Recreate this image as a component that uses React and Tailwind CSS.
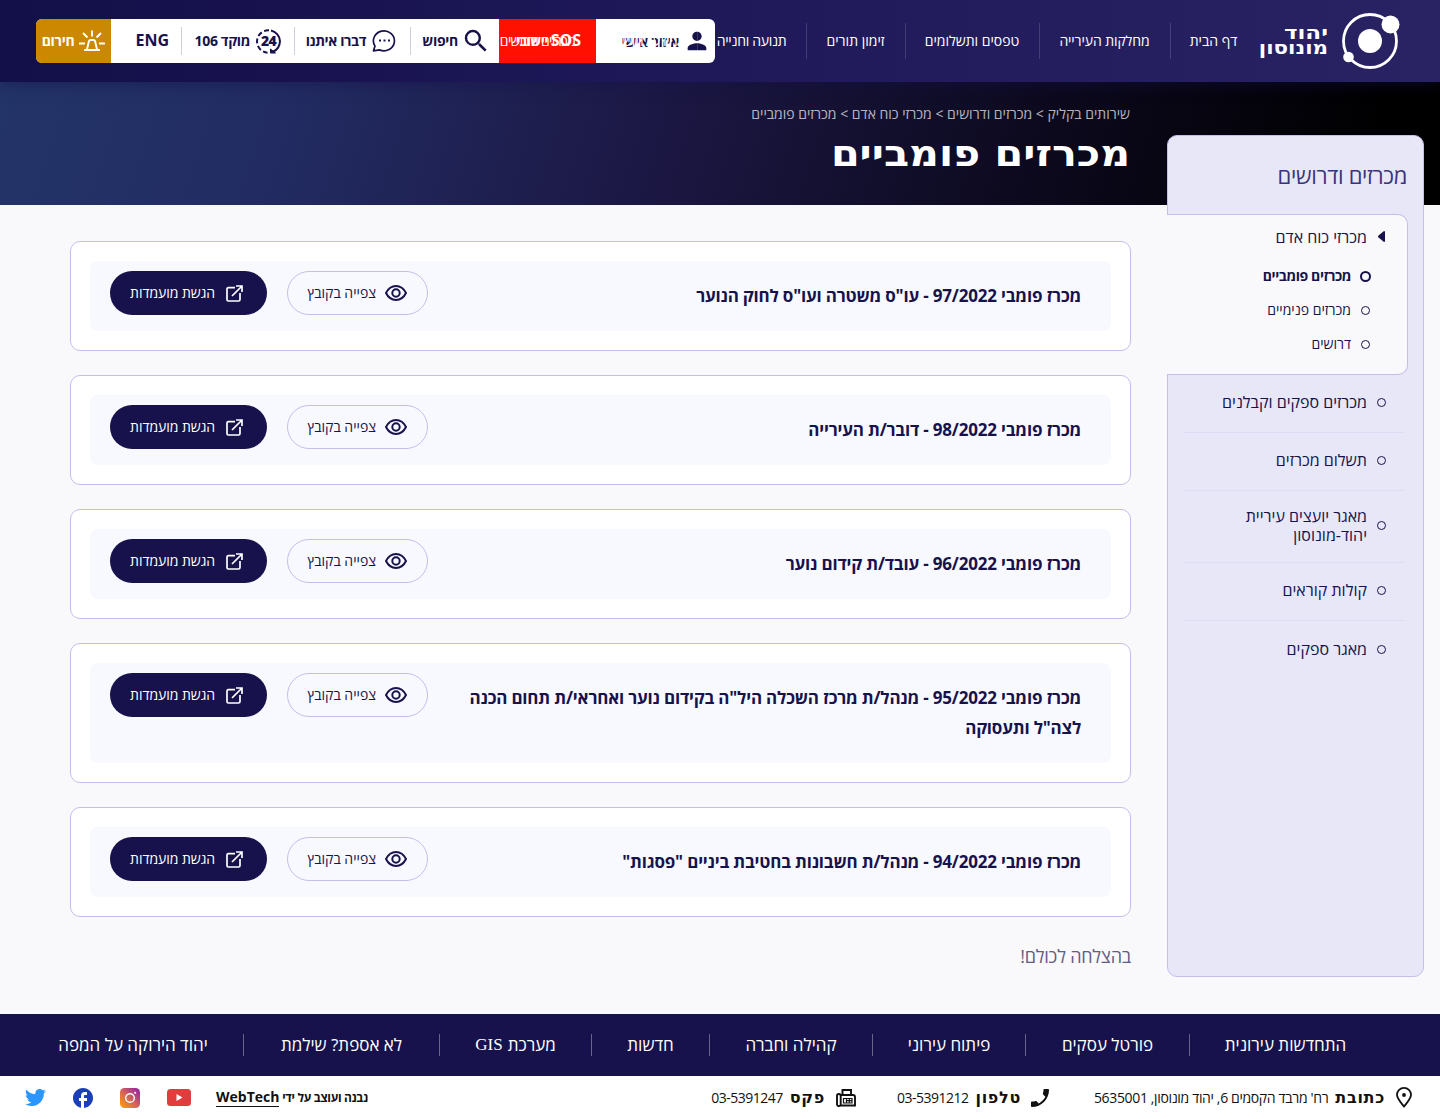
import React from 'react';
import clsx from 'clsx';
import { MdPerson, MdSearch, MdPhone, MdFacebook } from 'react-icons/md';
import { FaTwitter } from 'react-icons/fa';

const NAV_ITEMS = [
  { label: 'דף הבית', width: 'w-[87px]' },
  { label: 'מחלקות העירייה', width: 'w-[131px]', tracking: 'tracking-[-0.1px]' },
  { label: 'טפסים ותשלומים', width: 'w-[134px]' },
  { label: 'זימון תורים', width: 'w-[99px]' },
  { label: 'תנועה וחנייה', width: 'w-[109px]', tracking: 'tracking-[-0.3px]' },
  { label: 'מידע לתושב', width: 'w-[101px]', tracking: 'tracking-[-0.6px]' },
  { label: 'מכרזים ודרושים', width: 'w-[116px]', tracking: 'tracking-[-0.7px]' },
];

const SUB_ITEMS = [
  { label: 'מכרזים פומביים', active: true },
  { label: 'מכרזים פנימיים' },
  { label: 'דרושים' },
];

const SIDE_ITEMS = [
  { label: 'מכרזים ספקים וקבלנים', height: 'h-[58px]' },
  { label: 'תשלום מכרזים', height: 'h-[58px]' },
  { label: 'מאגר יועצים עיריית יהוד-מונוסון', height: 'h-[72px]' },
  { label: 'קולות קוראים', height: 'h-[58px]' },
  { label: 'מאגר ספקים', height: 'h-[58px]' },
];

const TENDERS = [
  'מכרז פומבי 97/2022 - עו"ס משטרה ועו"ס לחוק הנוער',
  'מכרז פומבי 98/2022 - דובר/ת העירייה',
  'מכרז פומבי 96/2022 - עובד/ת קידום נוער',
  'מכרז פומבי 95/2022 - מנהל/ת מרכז השכלה היל"ה בקידום נוער ואחראי/ת תחום הכנה לצה"ל ותעסוקה',
  'מכרז פומבי 94/2022 - מנהל/ת חשבונות בחטיבת ביניים "פסגות"',
];

const FOOTER_LINKS = [
  { label: 'התחדשות עירונית', width: 'w-[192px]' },
  { label: 'פורטל עסקים', width: 'w-[164px]' },
  { label: 'פיתוח עירוני', width: 'w-[153px]' },
  { label: 'קהילה וחברה', width: 'w-[163px]' },
  { label: 'חדשות', width: 'w-[118px]' },
  { label: 'מערכת', latin: 'GIS', width: 'w-[152px]' },
  { label: 'לא אספת? שילמת', width: 'w-[196px]' },
  { label: 'יהוד הירוקה על המפה', width: 'w-[220px]' },
];

const SirenIcon = () => (
  <svg width="26" height="22" viewBox="0 0 26 22" fill="none" stroke="currentColor" strokeWidth="1.9">
    <path d="M5 20h16M8 19.500l1.900-8.200q.3-1.300 1.600-1.300h3q1.300 0 1.600 1.300l1.900 8.200" />
    <path d="M13 .5v6M4 3l4.500 4.500M22 3l-4.500 4.500M0 13.500h6M20 13.500h6" />
  </svg>
);

const ChatIcon = () => (
  <svg width="25" height="24" viewBox="0 0 24 24" fill="none" stroke="currentColor" strokeWidth="1.7" strokeLinejoin="round">
    <path d="M1 21.800l1.500-4.700A10.500 10 0 1 1 7 20.900z" />
    <path d="M6.500 11.500h2M11 11.500h2M15.500 11.500h2" strokeWidth="1.8" />
  </svg>
);

const HotlineIcon = () => (
  <span className="relative flex size-[25px] items-center justify-center">
    <svg className="absolute inset-0" width="25" height="25" viewBox="0 0 25 25" fill="none" stroke="currentColor" strokeWidth="2">
      <path d="M15 1.500A11.200 11.200 0 0 1 16.500 23" />
      <path d="M13 1.300A11.200 11.200 0 0 0 11.500 23.700" strokeDasharray="5 2.600" />
      <path d="M14.500 20v4h5z" fill="currentColor" strokeWidth="1" />
    </svg>
    <span className="text-[14px] leading-none font-extrabold tracking-[-0.8px]">24</span>
  </span>
);

const EyeIcon = () => (
  <svg width="22" height="16" viewBox="0 0 22 16" fill="none" stroke="currentColor" strokeWidth="2">
    <path d="M1 8Q4.500 1 11 1T21 8Q17.500 15 11 15T1 8z" />
    <circle cx="11" cy="8" r="3.700" />
  </svg>
);

const ExternalIcon = () => (
  <svg width="17" height="17" viewBox="0 0 17 17" fill="none" stroke="currentColor" strokeWidth="1.700">
    <path d="M9 2.700H2.300Q1 2.700 1 4V14.500Q1 16 2.300 16H12.500Q14 16 14 14.500V8" />
    <path d="M10 1h6v6M16 1L6 11" />
  </svg>
);

const PinIcon = () => (
  <svg width="16" height="21" viewBox="0 0 16 21" fill="none" stroke="currentColor" strokeWidth="1.800">
    <path d="M8 19.500C4 14.500 1 11.500 1 7.800a7 6.900 0 0 1 14 0C15 11.500 12 14.500 8 19.500z" />
    <circle cx="8" cy="8" r="1.900" fill="currentColor" stroke="none" />
  </svg>
);

const FaxIcon = () => (
  <svg width="20" height="18" viewBox="0 0 20 18" fill="none" stroke="currentColor" strokeWidth="1.900">
    <rect x="1" y="5" width="3.700" height="12" rx="1.800" />
    <path d="M4.700 16.500H19V8q0-2-2-2H5M6.500 6V1H15v5" />
    <path d="M7.500 9.500v4.500h8.500V9.500z M10.500 9v5M13.300 9v5M10 11.700h6" strokeWidth="1.200" />
  </svg>
);

const YoutubeIcon = () => (
  <svg width="24" height="17" viewBox="0 0 24 17">
    <rect width="24" height="17" rx="3.500" fill="#e23d3d" />
    <path d="M9.500 5v7l6-3.500z" fill="#fff" />
  </svg>
);

const InstagramIcon = () => (
  <svg width="20" height="20" viewBox="0 0 20 20" fill="none">
    <defs>
      <linearGradient id="insta" x1="0" y1="20" x2="20" y2="0" gradientUnits="userSpaceOnUse">
        <stop stopColor="#ffa000" />
        <stop offset="0.5" stopColor="#d2615c" />
        <stop offset="1" stopColor="#8c1bab" />
      </linearGradient>
    </defs>
    <rect width="20" height="20" rx="4.500" fill="url(#insta)" />
    <circle cx="10" cy="10" r="4.300" stroke="#fff" strokeWidth="1.400" />
    <circle cx="15.200" cy="4.800" r="1" fill="#fff" />
  </svg>
);

const Logo = () => (
  <div className="flex items-center gap-[13px] text-white">
    <svg width="59" height="56" viewBox="0 0 59 56" fill="none">
      <circle cx="29" cy="28" r="26.500" stroke="#fff" strokeWidth="2.800" />
      <circle cx="29" cy="28" r="12" fill="#fff" />
      <circle cx="49.500" cy="11.500" r="9" fill="#fff" />
      <circle cx="7.500" cy="44" r="5.300" fill="#fff" />
    </svg>
    <div className="w-[69px] pb-0.5 font-['DejaVu_Sans'] text-[18px] leading-[15px] font-bold">
      <div className="origin-right scale-x-[1.28]">יהוד</div>
      <div className="origin-right scale-x-[1.19] whitespace-nowrap">מונוסון</div>
    </div>
  </div>
);

const ActionBar = () => (
  <div className="absolute top-[19px] left-9 flex h-11 w-[679px] items-center overflow-hidden rounded-md bg-white text-[14px] font-bold whitespace-nowrap text-[#17124b]">
    <div className="flex h-full w-[119px] items-center gap-2 pr-2">
      <MdPerson className="-mx-1 size-7" />
      <span className="tracking-[-0.4px]">איזור אישי</span>
    </div>
    <div className="flex h-full w-[97px] items-center bg-[#ff1000] pr-[15px] pb-0.5 text-white">
      <span className="tracking-[-0.6px]">
        <span className="text-[16px] tracking-normal">SOS</span> יישובי
      </span>
    </div>
    <div className="flex h-7 w-[89px] items-center gap-[3px] border-l border-[#d0cfdb] pr-2">
      <MdSearch className="size-[30px]" />
      <span className="pb-0.5 tracking-[-0.3px]">חיפוש</span>
    </div>
    <div className="flex h-7 w-[116px] items-center gap-[6px] border-l border-[#d0cfdb] pr-[13px]">
      <ChatIcon />
      <span className="pb-0.5 tracking-[-0.4px]">דברו איתנו</span>
    </div>
    <div className="flex h-7 w-[113px] items-center gap-[6px] border-l border-[#d0cfdb] pr-[13px]">
      <HotlineIcon />
      <span className="pb-0.5 tracking-[-0.35px]">מוקד 106</span>
    </div>
    <div className="flex h-full w-[70px] items-center pr-3 pb-0.5 text-[16px]">ENG</div>
    <div className="flex h-full w-[75px] items-center justify-center gap-[5px] bg-[#cc8800] text-white">
      <SirenIcon />
      <span className="pb-0.5 tracking-[-0.3px]">חירום</span>
    </div>
  </div>
);

const Header = () => (
  <header className="relative z-10 h-[82px] bg-linear-to-l from-[#292364] via-[#1f195a] to-[#130f48] shadow-[0_2px_14px_rgba(20,16,72,0.5)]">
    <ActionBar />
    <div className="relative flex h-full items-center pr-10">
      <Logo />
      <nav className="mr-[2px] flex">
        {NAV_ITEMS.map((item, i) => (
          <a
            key={item.label}
            className={clsx(
              'flex h-9 shrink-0 items-center justify-center pr-px pb-0.5 text-[14px] whitespace-nowrap text-white',
              item.width,
              item.tracking,
              i < NAV_ITEMS.length - 1 && 'border-l border-white/15'
            )}
          >
            {item.label}
          </a>
        ))}
      </nav>
    </div>
  </header>
);

const Bullet = ({ active }) => (
  <span className={clsx('shrink-0 rounded-full border-[#17124b]', active ? 'size-[11px] border-2' : 'mx-px size-[9px] border')} />
);

const Sidebar = () => (
  <aside className="-mt-[70px] h-[842px] w-[257px] shrink-0 rounded-[10px] border border-[#c6bdec] bg-[#e8e7f7] text-[#17124b]">
    <h2 className="flex h-[78px] items-center pr-4 text-[22px] tracking-[-0.3px] text-[#3a347c]">מכרזים ודרושים</h2>
    <div className="mr-[15px] -ml-px h-[161px] rounded-r-[10px] border border-l-0 border-[#c6bdec] bg-[#f9f9fb]">
      <div className="flex h-[43px] items-center gap-[11px] pr-[22px] text-[16px]">
        <svg width="7" height="11" viewBox="0 0 7 11">
          <path d="M6 0Q7 0 7 1v9q0 1-1 1L.5 6.500q-.9-1 0-2z" fill="#17124b" />
        </svg>
        <span>מכרזי כוח אדם</span>
      </div>
      <ul className="pt-px">
        {SUB_ITEMS.map((item) => (
          <li
            key={item.label}
            className={clsx('flex h-[34px] items-center gap-[9px] pr-9 text-[14px]', item.active && 'font-bold tracking-[-0.4px]')}
          >
            <Bullet active={item.active} />
            <span className="pb-px">{item.label}</span>
          </li>
        ))}
      </ul>
    </div>
    <ul className="mr-[18px] ml-4 divide-y divide-[#e0dcf6]">
      {SIDE_ITEMS.map((item) => (
        <li key={item.label} className={clsx('flex items-center gap-[9px] pr-[18px] pb-0.5 text-[16px] leading-[19px]', item.height)}>
          <Bullet />
          <span className="w-[150px]">{item.label}</span>
        </li>
      ))}
    </ul>
  </aside>
);

const TenderCard = ({ title }) => (
  <article className="rounded-[10px] border border-[#c6bdec] bg-white p-[19px]">
    <div className="flex items-start justify-between rounded-lg bg-[#f8f9ff] pr-[30px] pl-5">
      <h3 className="w-[620px] py-5 text-[17px] leading-[30px] font-bold tracking-[-0.19px] text-[#17124b]">{title}</h3>
      <div className="mt-[10px] flex gap-5 text-[14px]">
        <button className="flex h-11 w-[141px] items-center gap-[9px] rounded-full border border-[#c6bdec] pr-5 text-[#17124b]">
          <EyeIcon />
          <span className="pb-px">צפייה בקובץ</span>
        </button>
        <button className="flex h-11 w-[157px] items-center gap-[11px] rounded-full bg-[#17124b] pr-6 tracking-[-0.05px] text-white">
          <ExternalIcon />
          <span className="pb-px">הגשת מועמדות</span>
        </button>
      </div>
    </div>
  </article>
);

const ContactItem = ({ icon, title, text, className, textClass }) => (
  <div className={clsx('flex items-center whitespace-nowrap', className)}>
    {icon}
    <span className="mr-[11px] ml-[7px] font-['DejaVu_Sans'] text-[16px] font-bold tracking-[0.7px]">{title}</span>
    <span className={clsx('text-[14px]', textClass)}>{text}</span>
  </div>
);

const Footer = () => (
  <footer>
    <div className="flex h-[62px] items-center bg-[#17124b] pr-[59px] text-[17px] text-white">
      {FOOTER_LINKS.map((link, i) => (
        <a
          key={link.label}
          className={clsx(
            'flex h-[22px] shrink-0 items-center justify-center gap-[5px] whitespace-nowrap',
            link.width,
            i < FOOTER_LINKS.length - 1 && 'border-l border-white/35'
          )}
        >
          {link.label}
          {link.latin && <span className="font-['Liberation_Serif'] text-[17px]">{link.latin}</span>}
        </a>
      ))}
    </div>
    <div className="flex h-[43px] items-center bg-white pr-7 pl-[25px] text-[#111]">
      <ContactItem
        className="w-[362px]"
        icon={<PinIcon />}
        title="כתובת"
        text="רח' מרבד הקסמים 6, יהוד מונוסון, 5635001"
        textClass="tracking-[-0.35px]"
      />
      <ContactItem
        className="w-[194px]"
        icon={<MdPhone className="-mr-[2px] -ml-1 size-6 -scale-x-100" />}
        title="טלפון"
        text="03-5391212"
        textClass="tracking-[-0.5px]"
      />
      <ContactItem icon={<FaxIcon />} title="פקס" text="03-5391247" textClass="tracking-[-0.5px]" />
      <div className="mr-auto flex items-center">
        <span className="text-[12px] font-bold tracking-[-0.35px]">
          נבנה ועוצב על ידי <a className="border-b border-[#111] text-[14px] leading-none tracking-normal">WebTech</a>
        </span>
        <div className="mr-[25px] flex items-center gap-[27px]">
          <YoutubeIcon />
          <InstagramIcon />
          <MdFacebook className="-mx-[2px] size-6 text-[#1a3fb8]" />
          <FaTwitter className="size-[21px] text-[#2a96ff]" />
        </div>
      </div>
    </div>
  </footer>
);

export default function App() {
  return (
    <div dir="rtl" className="flex h-[1119px] w-[1440px] flex-col overflow-hidden bg-[#f9f9fb] font-['Open_Sans','Noto_Sans',sans-serif]">
      <Header />
      <section className="h-[123px] bg-[linear-gradient(108deg,#233468_0%,#222c62_20%,#1c1845_45%,#0d0a20_70%,#000_95%)] pt-5 pr-[310px]">
        <p className="h-6 text-[14px] leading-6 text-white/70">
          שירותים בקליק &gt; מכרזים ודרושים &gt; מכרזי כוח אדם &gt; מכרזים פומביים
        </p>
        <h1 className="mt-[7px] w-fit origin-right scale-x-[1.146] font-['DejaVu_Sans'] text-[36px] leading-[42px] font-bold whitespace-nowrap text-white">
          מכרזים פומביים
        </h1>
      </section>
      <div className="flex h-[809px] gap-9 pr-4">
        <Sidebar />
        <main className="w-[1061px] pt-9">
          <div className="flex flex-col gap-6">
            {TENDERS.map((title) => (
              <TenderCard key={title} title={title} />
            ))}
          </div>
          <p className="mt-6 text-[18px] leading-[30px] tracking-[-0.2px] text-[#625c86]">בהצלחה לכולם!</p>
        </main>
      </div>
      <Footer />
    </div>
  );
}
